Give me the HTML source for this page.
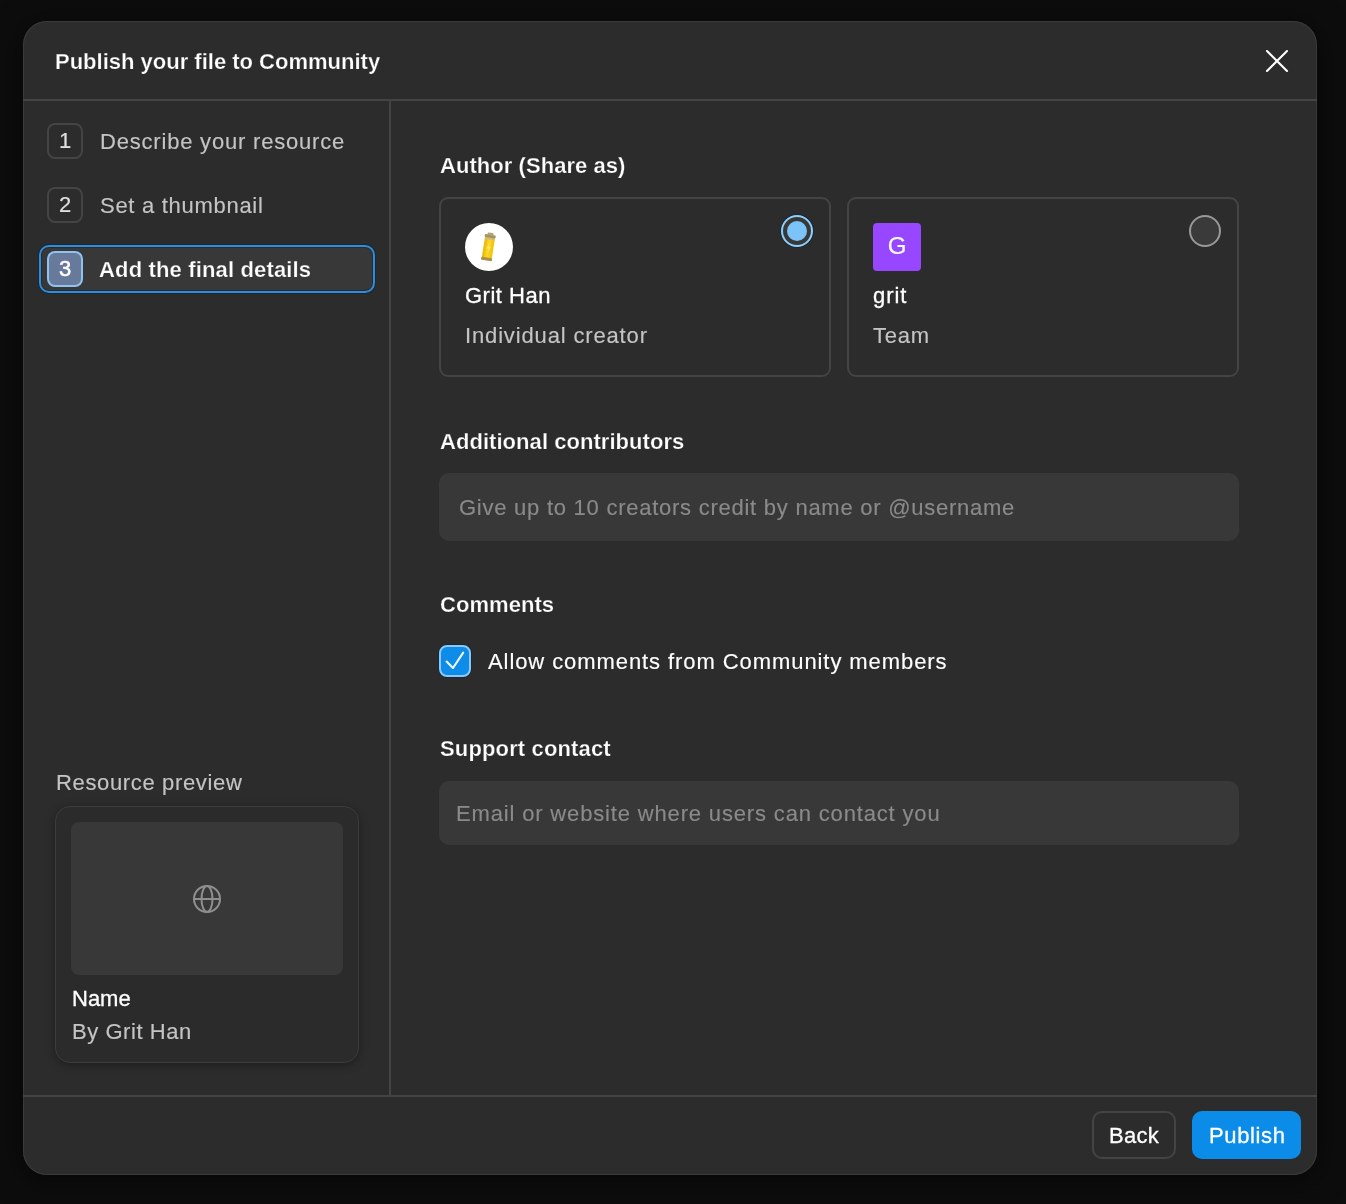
<!DOCTYPE html>
<html><head><meta charset="utf-8">
<style>
html,body{margin:0;padding:0;}
body{width:1346px;height:1204px;background:#0d0d0d;position:relative;overflow:hidden;font-family:"Liberation Sans",sans-serif;}
.a{position:absolute;}
.t{position:absolute;white-space:nowrap;font-size:22px;line-height:22px;will-change:transform;-webkit-text-stroke:0.15px currentColor;}
.sb{font-weight:700;-webkit-text-stroke:0.25px #2c2c2c;}
#dlg{left:23px;top:21px;width:1294px;height:1154px;background:#2c2c2c;border-radius:24px;box-shadow:0 0 0 1px #3a3a3a inset, 0 4px 32px rgba(0,0,0,.6);}
.hl{background:#444;}
.step{width:32px;height:32px;border:2px solid #444;border-radius:8px;color:#e0e0e0;text-align:center;}
.card{border:2px solid #444;border-radius:9px;box-sizing:border-box;}
.input{background:#383838;border-radius:10px;}
.lbl{font-weight:700;color:#fff;letter-spacing:0.05px;-webkit-text-stroke:0.25px #2c2c2c;}
.ph{color:#8a8a8a;}
</style></head><body>
<div id="dlg" class="a"></div>
<!-- header -->
<div class="t sb" style="left:55px;top:51px;color:#fff;">Publish your file to Community</div>
<svg class="a" style="left:1262px;top:46px" width="30" height="30" viewBox="0 0 30 30"><path d="M5 5 L25 25 M25 5 L5 25" stroke="#fff" stroke-width="2.1" stroke-linecap="round"/></svg>
<div class="a hl" style="left:23px;top:99px;width:1294px;height:2px"></div>
<div class="a hl" style="left:389px;top:101px;width:2px;height:994px"></div>
<div class="a hl" style="left:23px;top:1095px;width:1294px;height:2px"></div>

<!-- steps -->
<div class="a step" style="left:47px;top:123px;"><div class="t" style="position:relative;line-height:32px;">1</div></div>
<div class="t" style="left:100px;top:131px;color:#c4c4c4;letter-spacing:0.8px;">Describe your resource</div>
<div class="a step" style="left:47px;top:187px;"><div class="t" style="position:relative;line-height:32px;">2</div></div>
<div class="t" style="left:100px;top:195px;color:#c4c4c4;letter-spacing:0.71px;">Set a thumbnail</div>
<div class="a" style="left:39px;top:245px;width:332px;height:44px;border:2px solid #4189c4;border-radius:10px;background:#383838;box-shadow:0 0 0 1px rgba(0,45,85,.85), inset 0 0 0 1px rgba(0,40,80,.55);"></div>
<div class="a step" style="left:47px;top:251px;background:#687a9c;border-color:#8ec3f0;color:#fff;"><div class="t" style="position:relative;line-height:32px;-webkit-text-stroke:0.5px #fff;">3</div></div>
<div class="t" style="left:99px;top:259px;font-weight:700;-webkit-text-stroke:0.25px #383838;color:#fff;letter-spacing:0.15px;">Add the final details</div>

<!-- resource preview -->
<div class="t" style="left:56px;top:772px;color:#c4c4c4;letter-spacing:0.65px;">Resource preview</div>
<div class="a" style="left:55px;top:806px;width:302px;height:255px;border:1px solid #3c3c3c;border-radius:15px;background:#2b2b2b;box-shadow:0 2px 8px rgba(0,0,0,.35);"></div>
<div class="a" style="left:71px;top:822px;width:272px;height:153px;background:#383838;border-radius:8px;"></div>
<svg class="a" style="left:191px;top:883px" width="32" height="32" viewBox="0 0 32 32"><g fill="none" stroke="#8f8f8f" stroke-width="2"><circle cx="16" cy="16" r="13"/><ellipse cx="16" cy="16" rx="5.5" ry="13"/><path d="M3 16 H29"/></g></svg>
<div class="t" style="left:72px;top:988px;color:#fff;-webkit-text-stroke:0.3px #fff;">Name</div>
<div class="t" style="left:72px;top:1021px;color:#c4c4c4;letter-spacing:0.55px;">By Grit Han</div>

<!-- right content -->
<div class="t lbl" style="left:440px;top:155px;">Author (Share as)</div>
<div class="a card" style="left:439px;top:197px;width:392px;height:180px;"></div>
<div class="a card" style="left:847px;top:197px;width:392px;height:180px;"></div>
<div class="a" style="left:465px;top:223px;width:48px;height:48px;border-radius:50%;background:#fff;"></div>
<svg class="a" style="left:474px;top:228px" width="28" height="38" viewBox="0 0 28 38"><defs><linearGradient id="bg1" x1="0" x2="1" y1="0" y2="0"><stop offset="0" stop-color="#e9b400"/><stop offset="0.5" stop-color="#ffd629"/><stop offset="1" stop-color="#f2c000"/></linearGradient></defs><g transform="rotate(9 14 19)"><rect x="9.5" y="10" width="10" height="21" fill="url(#bg1)"/><rect x="9.5" y="9" width="10" height="2.5" fill="#cdbb7a"/><rect x="9" y="6.5" width="11" height="3" rx="0.8" fill="#a39462"/><rect x="11.5" y="4.5" width="6" height="2.5" rx="0.8" fill="#b5a678"/><rect x="9" y="29.5" width="11" height="3" rx="0.8" fill="#a8924e"/><path d="M15.5 14 L12.5 20.5 H15 L13.5 26 L17 18.5 H14.5 Z" fill="#fff27a" opacity="0.85"/></g></svg>
<div class="t" style="left:465px;top:285px;color:#fff;letter-spacing:0.5px;-webkit-text-stroke:0.3px #fff;">Grit Han</div>
<div class="t" style="left:465px;top:325px;color:#c4c4c4;letter-spacing:0.85px;">Individual creator</div>
<div class="a" style="left:781px;top:215px;width:28px;height:28px;border:2px solid #94cdf5;border-radius:50%;background:#383838;box-shadow:0 0 0 1px rgba(8,40,70,.7);"></div>
<div class="a" style="left:787px;top:221px;width:20px;height:20px;background:#7cc4f8;border-radius:50%;"></div>
<div class="a" style="left:873px;top:223px;width:48px;height:48px;border-radius:4px;background:#9747ff;"></div>
<div class="t" style="left:873px;top:234px;width:48px;text-align:center;color:#fff;font-size:24px;line-height:24px;">G</div>
<div class="t" style="left:873px;top:285px;color:#fff;letter-spacing:0.95px;-webkit-text-stroke:0.3px #fff;">grit</div>
<div class="t" style="left:873px;top:325px;color:#c4c4c4;letter-spacing:0.8px;">Team</div>
<div class="a" style="left:1189px;top:215px;width:28px;height:28px;border:2px solid #999;border-radius:50%;background:#3a3a3a;"></div>

<div class="t lbl" style="left:440px;top:431px;">Additional contributors</div>
<div class="a input" style="left:439px;top:473px;width:800px;height:68px;"></div>
<div class="t ph" style="left:459px;top:497px;letter-spacing:0.745px;">Give up to 10 creators credit by name or @username</div>

<div class="t lbl" style="left:440px;top:594px;">Comments</div>
<div class="a" style="left:439px;top:645px;width:28px;height:28px;background:#0d8ce9;border:2px solid #8ec8f5;border-radius:8px;box-shadow:0 0 0 1px rgba(8,40,70,.6);"></div>
<svg class="a" style="left:439px;top:645px" width="32" height="32" viewBox="0 0 32 32"><path d="M7.6 16.6 L14 23 L24.2 7.6" fill="none" stroke="#f0f8ff" stroke-width="2.1" stroke-linecap="round" stroke-linejoin="round"/></svg>
<div class="t" style="left:488px;top:651px;color:#fff;letter-spacing:0.92px;">Allow comments from Community members</div>

<div class="t lbl" style="left:440px;top:738px;letter-spacing:0.14px;">Support contact</div>
<div class="a input" style="left:439px;top:781px;width:800px;height:64px;"></div>
<div class="t ph" style="left:456px;top:803px;letter-spacing:0.84px;">Email or website where users can contact you</div>

<!-- footer -->
<div class="a" style="left:1092px;top:1111px;width:80px;height:44px;border:2px solid #444;border-radius:10px;"></div>
<div class="t" style="left:1109px;top:1125px;color:#fff;letter-spacing:0.25px;-webkit-text-stroke:0.3px #fff;">Back</div>
<div class="a" style="left:1192px;top:1111px;width:109px;height:48px;background:#0c8ce9;border-radius:10px;"></div>
<div class="t" style="left:1209px;top:1125px;color:#fff;letter-spacing:0.62px;-webkit-text-stroke:0.3px #fff;">Publish</div>
</body></html>
